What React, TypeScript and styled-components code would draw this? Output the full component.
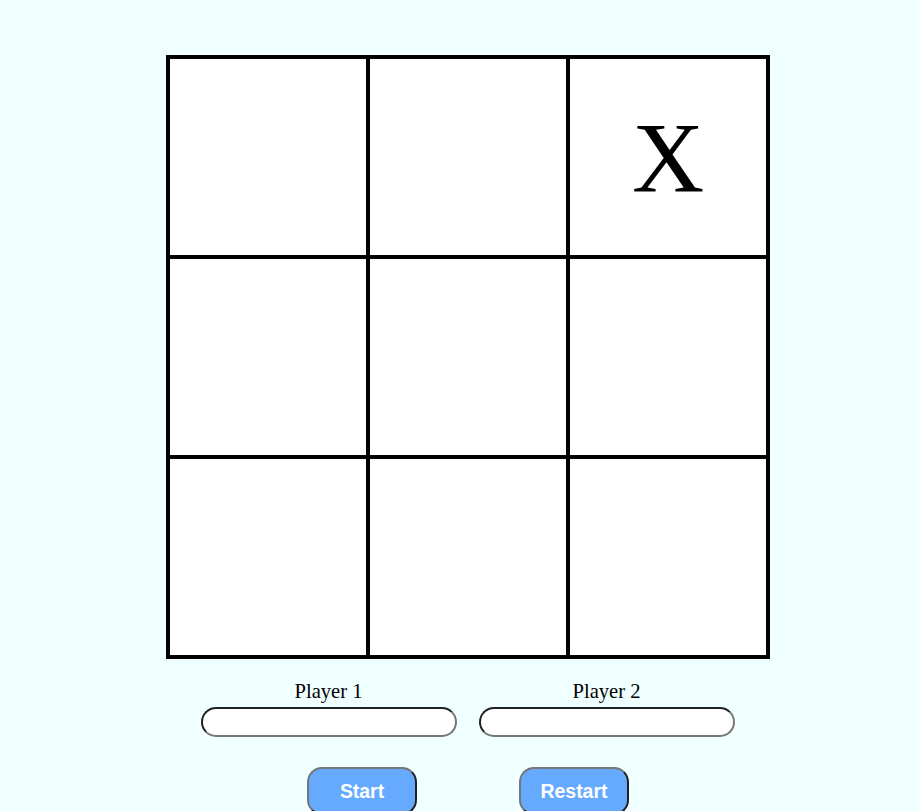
import React, { useState } from "react";
import styled, { createGlobalStyle } from "styled-components";

const GlobalStyle = createGlobalStyle`
  html, body {
    margin: 0;
    padding: 0;
    background: #f0ffff;
    font-family: "Liberation Serif", "Times New Roman", serif;
  }
`;

const Page = styled.div`
  display: flex;
  flex-direction: column;
  align-items: center;
  padding: 55px 0 0 16px;
`;

const Board = styled.div`
  display: grid;
  grid-template-columns: repeat(3, 200px);
  grid-template-rows: repeat(3, 200px);
  border: 2px solid #000;
  background: #fff;
`;

const Cell = styled.div`
  box-sizing: border-box;
  border: 2px solid #000;
  display: flex;
  align-items: center;
  justify-content: center;
  font-family: "Liberation Serif", "Times New Roman", serif;
  font-size: 100px;
  color: #000;
  cursor: pointer;
`;

const PlayerRow = styled.div`
  display: flex;
  gap: 22px;
  margin-top: 21px;
  margin-right: 1px;
`;

const PlayerField = styled.div`
  display: flex;
  flex-direction: column;
  align-items: center;
  width: 256px;
`;

const Label = styled.label`
  font-size: 20.6px;
  line-height: 23px;
  color: #000;
`;

const NameInput = styled.input`
  box-sizing: border-box;
  margin-top: 4px;
  width: 256px;
  height: 30px;
  border: 2px inset #767676;
  border-radius: 15px;
  background: #fff;
  padding: 0 12px;
  font-size: 16px;
  outline: none;
`;

const ButtonRow = styled.div`
  display: flex;
  gap: 102px;
  margin-top: 30px;
`;

const ActionButton = styled.button`
  box-sizing: border-box;
  width: 110px;
  height: 48px;
  border: 2px outset #767676;
  border-radius: 15px;
  background: #66aaff;
  color: #fff;
  font-family: "Liberation Sans", Arial, sans-serif;
  font-weight: bold;
  font-size: 19.4px;
  cursor: pointer;
`;

export default function App() {
  const [cells] = useState<string[]>(["", "", "X", "", "", "", "", "", ""]);
  return (
    <>
      <GlobalStyle />
      <Page>
        <Board>
          {cells.map((c, i) => (
            <Cell key={i}>{c}</Cell>
          ))}
        </Board>
        <PlayerRow>
          <PlayerField>
            <Label htmlFor="p1">Player 1</Label>
            <NameInput id="p1" type="text" />
          </PlayerField>
          <PlayerField>
            <Label htmlFor="p2">Player 2</Label>
            <NameInput id="p2" type="text" />
          </PlayerField>
        </PlayerRow>
        <ButtonRow>
          <ActionButton>Start</ActionButton>
          <ActionButton>Restart</ActionButton>
        </ButtonRow>
      </Page>
    </>
  );
}
